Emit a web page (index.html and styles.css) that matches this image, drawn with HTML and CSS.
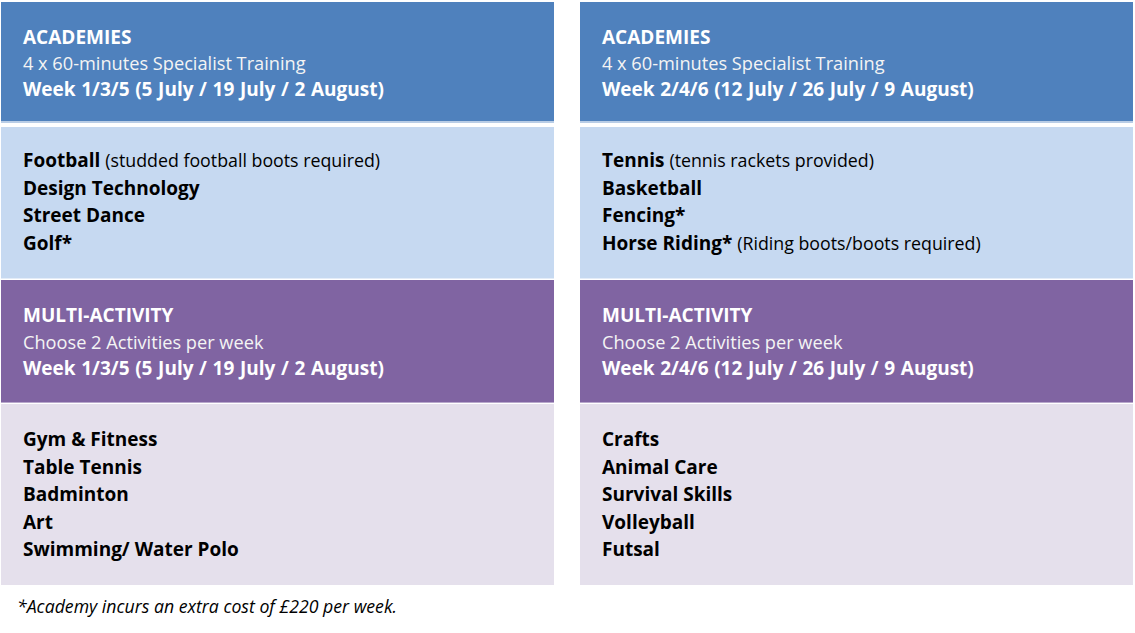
FILE: index.html
```html
<!DOCTYPE html>
<html lang="en">
<head>
<meta charset="utf-8">
<title>Academies and Multi-Activity</title>
<link rel="stylesheet" href="styles.css">
</head>
<body>
<div class="page">
  <div class="columns">
    <div class="column">
      <div class="block head academy">
        <div class="title">ACADEMIES</div>
        <div class="sub">4 x 60-minutes Specialist Training</div>
        <div class="week">Week 1/3/5 (5 July / 19 July / 2 August)</div>
      </div>
      <div class="block list academy-list">
        <div class="item">Football <span class="note">(studded football boots required)</span></div>
        <div class="item">Design Technology</div>
        <div class="item">Street Dance</div>
        <div class="item">Golf*</div>
      </div>
      <div class="block head multi">
        <div class="title">MULTI-ACTIVITY</div>
        <div class="sub">Choose 2 Activities per week</div>
        <div class="week">Week 1/3/5 (5 July / 19 July / 2 August)</div>
      </div>
      <div class="block list multi-list">
        <div class="item">Gym &amp; Fitness</div>
        <div class="item">Table Tennis</div>
        <div class="item">Badminton</div>
        <div class="item">Art</div>
        <div class="item">Swimming/ Water Polo</div>
      </div>
    </div>
    <div class="column">
      <div class="block head academy">
        <div class="title">ACADEMIES</div>
        <div class="sub">4 x 60-minutes Specialist Training</div>
        <div class="week">Week 2/4/6 (12 July / 26 July / 9 August)</div>
      </div>
      <div class="block list academy-list">
        <div class="item">Tennis <span class="note">(tennis rackets provided)</span></div>
        <div class="item">Basketball</div>
        <div class="item">Fencing*</div>
        <div class="item">Horse Riding* <span class="note">(Riding boots/boots required)</span></div>
      </div>
      <div class="block head multi">
        <div class="title">MULTI-ACTIVITY</div>
        <div class="sub">Choose 2 Activities per week</div>
        <div class="week">Week 2/4/6 (12 July / 26 July / 9 August)</div>
      </div>
      <div class="block list multi-list">
        <div class="item">Crafts</div>
        <div class="item">Animal Care</div>
        <div class="item">Survival Skills</div>
        <div class="item">Volleyball</div>
        <div class="item">Futsal</div>
      </div>
    </div>
  </div>
  <p class="footnote">*Academy incurs an extra cost of £220 per week.</p>
</div>
</body>
</html>
```
FILE: styles.css
```css
html, body {
  margin: 0;
  padding: 0;
  background: #ffffff;
}
body {
  font-family: "Open Sans", "Lato", sans-serif;
  color: #000000;
}
.page {
  padding: 2px 0 0 1px;
  width: 1135px;
  box-sizing: border-box;
}
.columns {
  display: flex;
  gap: 26px;
}
.column {
  width: 553px;
  display: flex;
  flex-direction: column;
}
.block {
  box-sizing: border-box;
  padding-left: 22px;
}
.head {
  color: #ffffff;
  line-height: 26px;
  font-size: 18px;
}
.head .title,
.head .week {
  font-weight: 700;
  font-size: 19px;
}
.head .week {
  word-spacing: 0.7px;
}
.head .sub {
  color: #f4f4f4;
  font-size: 18.2px;
}
.academy {
  background: #4f81bd;
  height: 121px;
  padding-top: 22px;
  border-bottom: 2px solid #b9cde6;
}
.academy-list {
  background: #c6d9f1;
  height: 152px;
  margin-top: 4px;
  padding-top: 20px;
  border-bottom: 1px solid #e3ecf8;
}
.multi {
  background: #8064a2;
  height: 123px;
  margin-top: 1px;
  padding-top: 22px;
  line-height: 26.5px;
  border-bottom: 1px solid #b8a8cc;
}
.multi-list {
  background: #e5e0ec;
  height: 181px;
  margin-top: 1px;
  padding-top: 22px;
}
.list {
  line-height: 27.5px;
  font-size: 19px;
  font-weight: 700;
}
.note {
  font-weight: 400;
  font-size: 17.8px;
}
.footnote {
  margin: 9px 0 0 16px;
  font-style: italic;
  font-size: 17.7px;
  line-height: 24px;
}
```
